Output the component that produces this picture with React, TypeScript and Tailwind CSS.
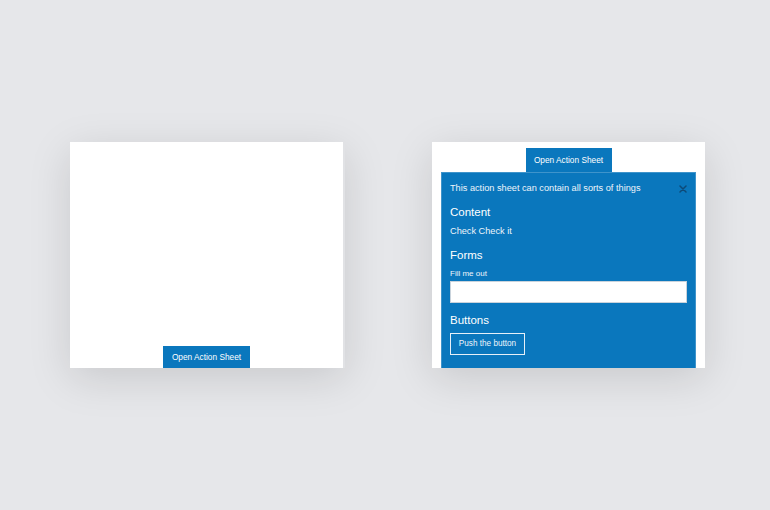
import React from "react";

const font = { fontFamily: '"Liberation Sans", Arial, sans-serif' };

export default function App() {
  return (
    <div
      className="w-[770px] h-[510px] bg-[#e6e7ea] flex items-center justify-center gap-[87px] pl-[5px]"
      style={font}
    >
      {/* Left card */}
      <div className="w-[275px] h-[226px] bg-white border-r-2 border-[#e1e2e5] shadow-[0_10px_40px_rgba(0,0,0,0.13)] flex flex-col justify-end items-center overflow-hidden">
        <button className="h-[22px] w-[87px] bg-[#0a77bd] text-white text-[8.3px] leading-none flex items-center justify-center">
          Open Action Sheet
        </button>
      </div>

      {/* Right card */}
      <div className="w-[273px] h-[226px] bg-white shadow-[0_10px_40px_rgba(0,0,0,0.13)] flex flex-col items-center px-[9px] pt-[6px] overflow-hidden">
        <button className="h-[24px] w-[86px] bg-[#0a77bd] text-white text-[8.3px] leading-none flex items-center justify-center shrink-0">
          Open Action Sheet
        </button>
        <div className="w-full flex-1 bg-[#0a77bd] border-x border-t border-[#3f94cb] px-[8px] pt-[9px] text-white">
          <div className="flex items-center justify-between h-[12px]">
            <span className="text-[9.2px] leading-[12px] text-[#eef5fb]">
              This action sheet can contain all sorts of things
            </span>
            <svg width="8" height="8" viewBox="0 0 8 8" className="mt-[2px]">
              <path d="M1 1L7 7M7 1L1 7" stroke="#0d4a78" strokeWidth="1.5" strokeLinecap="round" />
            </svg>
          </div>
          <div className="mt-[11px] text-[11.5px] leading-[14px]">Content</div>
          <div className="mt-[6px] text-[9.2px] leading-[12px] text-[#eef5fb]">Check Check it</div>
          <div className="mt-[11px] text-[11.5px] leading-[14px]">Forms</div>
          <div className="mt-[7px] text-[8px] leading-[10px] text-[#eef5fb]">Fill me out</div>
          <input
            type="text"
            className="mt-[2px] block w-full h-[22px] bg-white border border-[#c9d3dc] outline-none"
          />
          <div className="mt-[10px] text-[11.5px] leading-[14px]">Buttons</div>
          <button className="mt-[6px] h-[22px] w-[75px] border border-[#e6f0f8] text-[8.2px] leading-none flex items-center justify-center text-[#eef5fb]">
            Push the button
          </button>
        </div>
      </div>
    </div>
  );
}
